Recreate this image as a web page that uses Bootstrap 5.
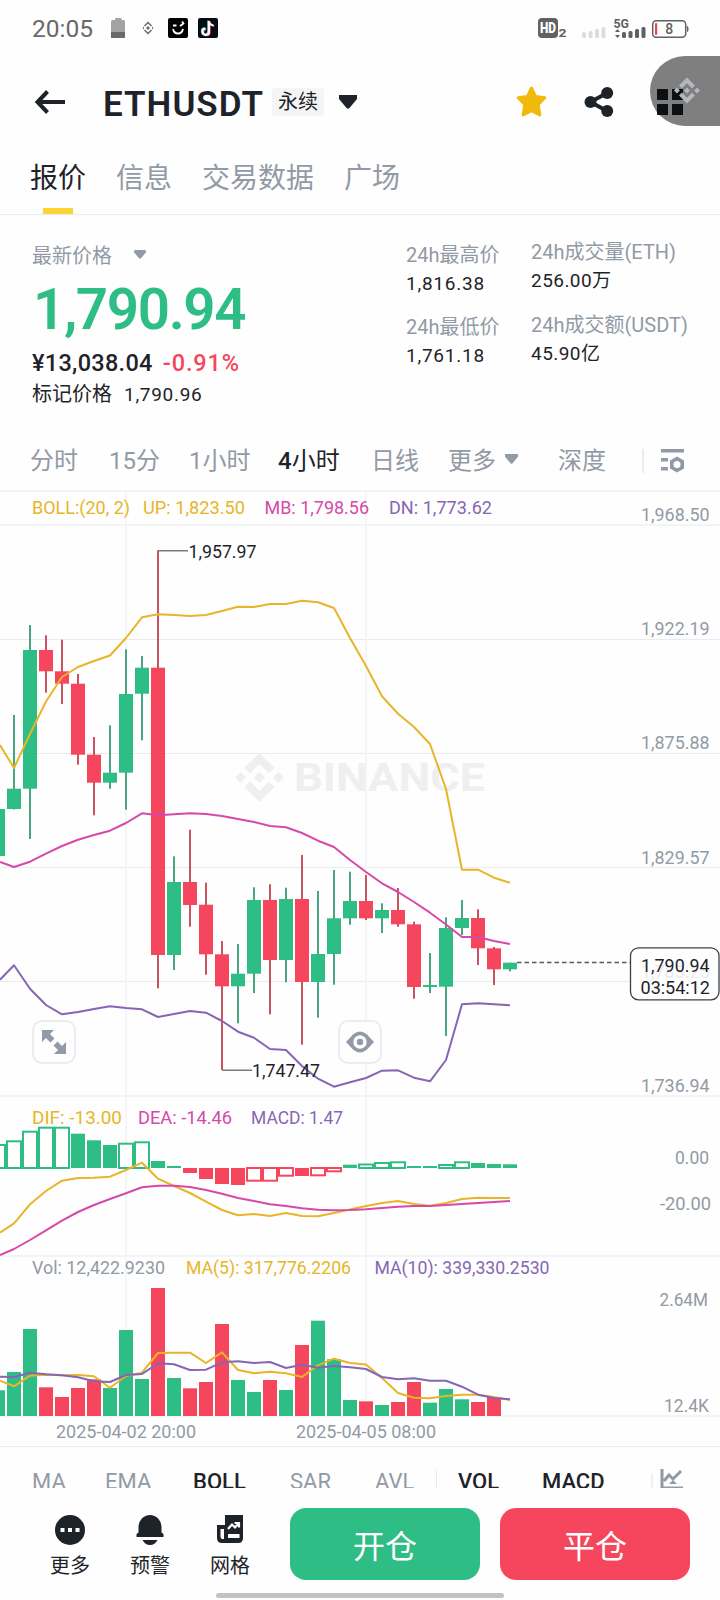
<!DOCTYPE html>
<html lang="zh-CN">
<head>
<meta charset="utf-8">
<meta name="viewport" content="width=device-width, initial-scale=1">
<title>ETHUSDT</title>
<link rel="stylesheet" href="https://cdn.jsdelivr.net/npm/bootstrap@5.3.0/dist/css/bootstrap.min.css">
<style>
:root{--ink:#1e2329;--dim:#929aa5;--up:#2ebd85;--down:#f6465d}
body{width:720px;height:1600px;overflow:hidden;background:#fefefe;color:var(--ink);font-family:Roboto,"Noto Sans CJK SC",sans-serif;font-weight:400}
svg{display:block;flex:none}
.dim{color:var(--dim)}
.t{white-space:nowrap;line-height:1}
.tracks{display:grid;align-items:center}
.status{height:56px;padding-left:32px;padding-top:2px}
.status svg{overflow:visible}
.status .clock{font-size:24.5px;color:#68696b;width:79px;padding-top:1px}
.head{height:92px;padding-left:34px}
.pair{font-size:35px;font-weight:600;width:168px;margin-left:37px;letter-spacing:1px;padding-top:4px}
.perp{width:52px;height:28px;background:#f5f5f5;border-radius:4px;font-size:20px;margin-left:1px}
.tabs{height:67px;grid-template-columns:86px 86px 142px 90px;padding-left:30px;font-size:28px;border-bottom:1px solid #eaecef;position:relative}
.tabs .t{padding-bottom:4px}
.tabs::after{content:"";position:absolute;left:43px;bottom:0;width:30px;height:6px;background:#fcd535}
.quote{height:219px;padding-left:32px;display:grid;grid-template-columns:374px 125px 189px}
.quote .lbl{font-size:20px;line-height:30px;white-space:nowrap}
.quote .val{font-size:19px;line-height:28px;white-space:nowrap;letter-spacing:.75px}
.last{font-size:56.5px;font-weight:600;color:var(--up);line-height:60px;height:67px;letter-spacing:-1.35px;margin-left:1px;margin-top:9px}
.fiat{font-size:23.5px;font-weight:500;line-height:30px;white-space:nowrap;letter-spacing:.3px;margin-top:1px}
.fiat .chg{color:var(--down);margin-left:10px;letter-spacing:.9px}
.frames{height:53px;grid-template-columns:79px 80px 89px 93px 77px 110px 84px 19px 30px;padding-left:30px;font-size:24px}
.chart{height:959px;margin-bottom:-3px;margin-top:0}
.chart text{font-size:18px}
.inds{height:42px;overflow:hidden;grid-template-columns:73px 88px 97px 85px 61px 22px 84px 109px 9px 30px;padding-left:32px;padding-top:24px;font-size:22px;align-items:start}
.inds .on,.frames .on{color:var(--ink);font-weight:500}
.frames .on i{font-style:normal;font-weight:400}
.foot{height:104px;padding-left:30px;padding-top:20px}
.foot .act{width:80px;font-size:20px;padding-top:7px;gap:11px}
.trade{width:190px;height:72px;border:0;border-radius:16px;font-size:32px;color:#fff;padding:6px 0 0}
.long,.long:hover{background:var(--up);margin-left:20px}
.short,.short:hover{background:var(--down);margin-left:20px}
.homebar{width:288px;height:5px;background:#c2c2c2;border-radius:3px;margin:1px auto 0}
.bubble{position:absolute;left:650px;top:56px;width:70px;height:70px;border-radius:35px 0 0 35px;background:rgba(0,0,0,.5)}
.bubble svg{position:absolute;left:24px;top:21px}
</style>
</head>
<body>
<svg width="0" height="0" style="position:absolute"><defs>
<symbol id="bn" viewBox="0 0 24 24"><path d="M16.624 13.9202l2.7175 2.7154-7.353 7.353-7.353-7.352 2.7175-2.7164 4.6355 4.6595 4.6356-4.6595zm4.6366-4.6366L24 12l-2.7154 2.7164L18.5682 12l2.6924-2.7164zm-9.272.001l2.7163 2.6914-2.7164 2.7174v-.001L9.2721 12l2.7164-2.7154zm-9.2722-.001L5.4088 12l-2.6914 2.6924L0 12l2.7164-2.7164zM11.9885.0115l7.353 7.329-2.7174 2.7154-4.6356-4.6356-4.6355 4.6595-2.7174-2.7154 7.353-7.353z"/></symbol>
<symbol id="caret" viewBox="0 0 18 14"><path d="M0 0H18V4L10.500 13Q9 14.500 7.500 13L0 4Z"/></symbol>
</defs></svg>

<div class="status d-flex align-items-center">
  <div class="clock t">20:05</div>
  <svg width="109" height="22" viewBox="0 0 109 22">
    <path d="M0 3.500Q0 2 1.500 2H4V1Q4 0 5 0H9.500Q10.500 0 10.500 1V2H12.500Q14 2 14 3.500V20H0Z" fill="#a3a3a5"/><path d="M0 14H14V19Q14 20 13 20H1Q0 20 0 19Z" fill="#6a6a6c"/>
    <g fill="none" stroke="#6a6a6c" stroke-width="1.500"><path d="M33.500 8L37 4.500 40.500 8M33.500 12L37 15.500 40.500 12"/></g><path d="M37 8L39 10 37 12 35 10ZM31.500 10L33 8.500V11.500ZM42.500 10L41 8.500V11.500Z" fill="#6a6a6c"/>
    <rect x="57" y="0" width="20" height="20" rx="2"/><path d="M62 7.500H65.500M69 8L72.500 5.500M71 3.500L73 6M62 11Q63 15.500 67 15.500T72 11" fill="none" stroke="#fff" stroke-width="1.800"/>
    <rect x="87" y="0" width="20" height="20" rx="2" fill="#070b14"/><path d="M98 3V13.500A3.200 3.200 0 1 1 94.500 10.500M98 3Q98.500 7 102.500 7.500" transform="translate(-.8 -.5)" fill="none" stroke="#4fe0d8" stroke-width="2"/><path d="M98 3V13.500A3.200 3.200 0 1 1 94.500 10.500M98 3Q98.500 7 102.500 7.500" transform="translate(.7 .5)" fill="none" stroke="#f0446a" stroke-width="2"/><path d="M98 3V13.500A3.200 3.200 0 1 1 94.500 10.500M98 3Q98.500 7 102.500 7.500" fill="none" stroke="#fff" stroke-width="2"/>
  </svg>
  <svg class="ms-auto" width="182" height="22" viewBox="0 0 182 22">
    <rect x="0" y="0" width="20" height="20" rx="4" fill="#606163"/><text x="2" y="15" font-size="14" font-weight="900" fill="#fff" textLength="16" lengthAdjust="spacingAndGlyphs">HD</text><text x="20.500" y="19" font-size="11.500" font-weight="700" fill="#606163" textLength="8" lengthAdjust="spacingAndGlyphs">2</text>
    <g fill="#dcdde0"><rect x="44" y="14" width="4" height="6" rx="1.500"/><rect x="50.500" y="13" width="4" height="7" rx="1.500"/><rect x="57" y="11" width="4" height="9" rx="1.500"/><rect x="63.500" y="9" width="4" height="11" rx="1.500"/></g>
    <g fill="#606163"><text x="75.500" y="10" font-size="13.500" font-weight="700" textLength="15.500" lengthAdjust="spacingAndGlyphs">5G</text><path d="M79.500 11L82 14H77ZM79.500 20L77 17H82Z"/><rect x="84" y="14" width="4" height="6" rx="1.500"/><rect x="90.500" y="13" width="4" height="7" rx="1.500"/><rect x="97" y="11" width="4" height="9" rx="1.500"/><rect x="103.500" y="9" width="4" height="11" rx="1.500"/></g>
    <rect x="114.700" y="2.700" width="33" height="16.500" rx="3.500" fill="#fff" stroke="#606163" stroke-width="1.500"/><rect x="117" y="5" width="2.200" height="12" rx="1" fill="#e5484d"/><path d="M149 8Q150.500 8 150.500 11T149 14Z" fill="#606163"/><text x="127.200" y="16" font-size="14" font-weight="500" fill="#606163">8</text>
  </svg>
</div>

<div class="head d-flex align-items-center">
  <svg width="32" height="24" viewBox="0 0 32 24"><path d="M3 12H31M13.500 1.500L3.500 12 13.500 22.500" fill="none" stroke="#1e2329" stroke-width="4"/></svg>
  <div class="pair t">ETHUSDT</div>
  <div class="perp t d-flex align-items-center justify-content-center">永续</div>
  <svg style="margin-left:15px" width="18" height="14" fill="#1e2329"><use href="#caret"/></svg>
  <svg style="margin-left:159px" width="31" height="32" viewBox="0 0 31 32"><path d="M15.500 2L19.500 10.500 28.800 11.800 22.300 18.500 23.800 29 15.500 24.700 7.200 29 8.700 18.500 2.200 11.800 11.500 10.500Z" fill="#f0b90b" stroke="#f0b90b" stroke-width="3" stroke-linejoin="round"/></svg>
  <svg style="margin-left:37px" width="30" height="32" viewBox="0 0 30 32"><path d="M6.500 16L23 7M6.500 16L23 25" stroke="#1e2329" stroke-width="4"/><g fill="#1e2329"><circle cx="6.500" cy="16" r="6"/><circle cx="23.200" cy="7" r="6"/><circle cx="23.200" cy="25" r="6"/></g></svg>
  <svg style="margin-left:42px" width="28" height="28" viewBox="0 0 28 28"><path d="M1 1H12V12H1ZM16 1H27V12H16ZM1 16H12V27H1ZM16 16H27V27H16Z" fill="#1a2027"/></svg>
</div>

<nav class="tabs tracks">
  <div class="t">报价</div><div class="t dim">信息</div><div class="t dim">交易数据</div><div class="t dim">广场</div>
</nav>

<section class="quote">
  <div style="padding-top:26px">
    <div class="lbl dim d-flex align-items-center">最新价格<svg style="margin-left:22px;margin-bottom:3px" width="12" height="9" fill="#929aa5"><use href="#caret"/></svg></div>
    <div class="last">1,790.94</div>
    <div class="fiat">¥13,038.04<span class="chg">-0.91%</span></div>
    <div class="lbl" style="padding-top:1px">标记价格<span style="font-size:19px;margin-left:12px;letter-spacing:.7px">1,790.96</span></div>
  </div>
  <div style="padding-top:25px">
    <div class="lbl dim">24h最高价</div><div class="val" style="margin-bottom:14px">1,816.38</div>
    <div class="lbl dim">24h最低价</div><div class="val">1,761.18</div>
  </div>
  <div style="padding-top:22px">
    <div class="lbl dim">24h成交量(ETH)</div><div class="val" style="margin-bottom:15px;letter-spacing:.45px">256.00万</div>
    <div class="lbl dim">24h成交额(USDT)</div><div class="val" style="letter-spacing:.45px">45.90亿</div>
  </div>
</section>

<nav class="frames tracks dim">
  <div class="t">分时</div><div class="t">15分</div><div class="t">1小时</div><div class="t on">4<i>小时</i></div><div class="t">日线</div>
  <div class="t d-flex align-items-center">更多<svg style="margin-left:9px;margin-bottom:4px" width="13" height="10" fill="#929aa5"><use href="#caret"/></svg></div>
  <div class="t">深度</div><div style="width:2px;height:24px;background:#eaecef;margin-left:0"></div>
  <svg width="24" height="26" viewBox="0 0 24 26" fill="#929aa5"><path d="M0 1H23V4.500H0ZM0 10H7V13.500H0ZM0 19H7V22.500H0Z"/><path fill-rule="evenodd" d="M16 8.500L23 12.500V20.500L16 24.500 9 20.500V12.500ZM16 13A3.500 3.500 0 1 0 16 20A3.500 3.500 0 1 0 16 13Z"/></svg>
</nav>

<svg class="chart" id="chart" width="720" height="959" viewBox="0 487 720 959"></svg>

<div class="inds tracks dim" style="border-top:1px solid #eaecef;margin-top:3px">
  <div class="t">MA</div><div class="t">EMA</div><div class="t on">BOLL</div><div class="t">SAR</div><div class="t">AVL</div>
  <div style="width:1px;height:22px;background:#eaecef;margin-top:-2px"></div>
  <div class="t on">VOL</div><div class="t on">MACD</div>
  <div style="width:2px;height:16px;background:#eff0f2;margin-top:2px"></div>
  <svg width="24" height="24" viewBox="0 0 24 24" style="margin-top:-2px"><path d="M2 0V19H23M4 12L9 6 13 10 21 2" fill="none" stroke="#929aa5" stroke-width="3"/><path d="M13 11L17 15H9Z" fill="#929aa5"/></svg>
</div>

<footer class="foot d-flex">
  <div class="act d-flex flex-column align-items-center">
    <svg width="30" height="30" viewBox="0 0 30 30"><circle cx="15" cy="15" r="15" fill="#1e2329"/><path d="M5.500 13H9.500V17H5.500ZM13 13H17V17H13ZM20.500 13H24.500V17H20.500Z" fill="#fff"/></svg><div class="t">更多</div></div>
  <div class="act d-flex flex-column align-items-center">
    <svg width="30" height="30" viewBox="0 0 30 30" fill="#1e2329"><path d="M3.500 12A11.500 12 0 0 1 26.500 12V17.500L28.500 19V22H1.500V19L3.500 17.500ZM7.500 25H22.500Q20 30 15 30T7.500 25Z"/></svg><div class="t">预警</div></div>
  <div class="act d-flex flex-column align-items-center">
    <svg width="30" height="30" viewBox="0 0 30 30"><path d="M10 0H28V23Q28 28 23 28H7Q2 28 2 23V10H10Z" fill="#1e2329"/><path d="M5.500 14H9V24H7.500Q5.500 24 5.500 21ZM13 19H24.500V23H13Z" fill="#fff"/><path d="M13 14L17 9.500 20 12.500 24 8M19.500 8H24V12.500" fill="none" stroke="#fff" stroke-width="2.200"/></svg><div class="t">网格</div></div>
  <button class="btn trade long">开仓</button>
  <button class="btn trade short">平仓</button>
</footer>
<div class="homebar"></div>

<div class="bubble"><svg width="26" height="27" fill="#b3b8be"><use href="#bn"/></svg></div>

<script>
const G='#2ebd85',R='#f6465d',GW='#47a581',RW='#c9545f',Y='#e8b528',P='#d649a8',V='#8666b4';
const X=i=>14+16*i;
let o='';
const rect=(x,y,w,h,f)=>o+=`<rect x="${x}" y="${y}" width="${w}" height="${h}" fill="${f}"/>`;
const text=(s,x,y,w,f,extra='')=>o+=`<text x="${x}" y="${y}" fill="${f}" textLength="${w}" lengthAdjust="spacingAndGlyphs" ${extra}>${s}</text>`;
// grid
[490,524,1095,1255,1415].forEach(y=>rect(0,y,720,2,'#f3f4f5'));
[639,753,867,981].forEach(y=>rect(0,y,720,1,'#e9ebed'));
[125,365].forEach(x=>rect(x,490,2,926,'#f4f5f6'));
// watermark
o+='<svg x="235" y="753" width="49" height="49" fill="#efefef"><use href="#bn"/></svg>';
text('BINANCE',294,791,191,'#efefef','style="font-size:38px;font-weight:700"');
// candles: high, top, bottom, low, up
const C=[[809,809,856,856,1],[715,788.7,809,809.5,1],[625,650,788.7,839,1],[635.3,650,671.3,692.7,0],[639.7,671.3,683.7,704,0],[674,683.7,754.7,764.7,0],[737,754.7,782.7,815.3,0],[725.3,772.7,782.7,788.7,1],[649.3,694,772.7,809.7,1],[656,667.7,693.7,740.3,1],[550.3,667.7,955,988.3,0],[856.3,882,955,970,1],[829.7,882,905,926.7,0],[882.7,904.7,954.3,974.7,0],[941,954.3,986.3,1070,0],[944,973.7,986.3,1023.3,1],[887.3,900,973.7,993,1],[884.3,900,960,1014.3,0],[887.7,899,960,982.3,1],[855,899,982,1044.7,0],[891,954,982,1017.7,1],[870,918.3,954,984.7,1],[871.7,901,918.3,924.7,1],[875,901,918.3,920,0],[903.3,910,918.3,933,1],[888,910,924.3,926.7,0],[921.7,924.3,987,998.7,0],[953,985,987,993,1],[917.3,928,986.7,1036,1],[900,918,928,935,1],[909.3,918,948.3,965,0],[947,948.3,969.3,985,0],[962.7,962.7,969.3,971.3,1]];
C.forEach(([h,t,b,l,u],k)=>{const x=X(k-1);rect(x-1,h,2,l-h,u?GW:RW);rect(x-7,t,14,b-t,u?G:R)});
// MACD histogram: edge, hollow
const M=[[1145,1],[1141.3,1],[1131.7,1],[1127.7,1],[1127.7,1],[1133.7,0],[1140.3,0],[1145,0],[1143.7,1],[1142.3,1],[1161,0],[1166,0],[1173,0],[1179,0],[1184,0],[1185,0],[1180.7,1],[1180.7,1],[1175.7,1],[1176,0],[1175.3,1],[1171.3,1],[1164.7,0],[1164.5,1],[1163,1],[1162.3,1],[1166,0],[1166,0],[1165,1],[1162.3,1],[1163,0],[1164,0],[1164.3,0]];
M.forEach(([e,hol],k)=>{const x=X(k-1),up=e<1168,c=up?G:R,t=up?e:1168,b=up?1168:e;
 if(hol)o+=`<rect x="${x-7}" y="${t}" width="14" height="${b-t}" fill="#fff" stroke="${c}" stroke-width="2"/>`;else rect(x-7,t,14,b-t,c)});
// volume, negative for a falling period
const W=[1390.3,1372,1329,-1387.3,-1397,-1388,-1379.3,1388,1330,1379,-1288,1378,-1388.3,-1382,-1324,1380,1392,-1380,1390,-1345,1320.7,1359.3,1400,-1401.3,1405,-1402,-1382,1402.7,1389,1399.3,-1402,-1397];
W.forEach((v,k)=>{const y=Math.abs(v);rect(X(k-1)-7,y,14,1416-y,v>0?G:R)});
// lines: the first value is at the left edge of the plot
const line=(a,c)=>o+=`<polyline fill="none" stroke="${c}" stroke-width="2" stroke-linejoin="round" points="${a.map((y,i)=>(i?X(i-1):0)+','+y).join(' ')}"/>`;
line([745,768,734,701.5,677,667,661,655.5,638,617.3,614.3,615,616,615,611,606.7,607,604,604,600.7,602.3,608,638,666,696.3,713.7,727,744,789,869.7,869.7,877.7,882.7],Y);
line([862,867,861.7,853.7,846,839.7,835,830.7,823,813.3,815.3,814.3,813.3,814,816,819,822,826,827.3,833,840.7,847,860,872,883.3,892,902,912.7,924.5,937,937,941,944],P);
line([979.7,965.3,988.7,1005,1014.3,1012,1009,1006.3,1008,1009.3,1017,1014,1011,1012.7,1021,1031.7,1037.7,1049,1050,1066,1078.7,1086.7,1082.3,1078,1070.7,1070.3,1077.7,1081.3,1060,1004.3,1003.3,1004.3,1005.3],V);
line([1232.7,1223.3,1204.3,1191,1180.7,1178,1177.7,1176.7,1170,1162.7,1178.7,1186,1193,1201.7,1210,1215.3,1214,1216,1213,1216,1216.3,1213,1209.5,1206,1203,1201,1204,1205.7,1203,1199,1197.7,1198,1198],Y);
line([1255,1249,1240,1230.3,1220.7,1212,1205,1199,1193.3,1187.3,1185.7,1185.7,1187,1190,1193.7,1198,1201,1204.3,1206,1208.3,1209.7,1210.3,1210,1209.3,1208,1206.7,1206,1206,1205,1204,1203,1202,1201],P);
line([1380.7,1386.3,1375.7,1374.7,1375.3,1375,1376.3,1387.7,1376,1372.7,1353,1352.7,1352.7,1363,1352.3,1370,1373.3,1371.7,1373.3,1377,1365.3,1358.7,1363,1364.5,1378,1393,1397.7,1398.3,1396,1394.7,1394.7,1397,1400],Y);
line([1376.7,1377,1372.7,1374.3,1375.3,1377.3,1381.3,1382,1375,1374,1363.3,1364.3,1370,1369.7,1362.3,1361.3,1363,1362,1368,1364.7,1367.7,1366,1367.3,1369,1377,1379.3,1378.3,1380.7,1380.7,1386.7,1394.7,1398,1399.3],V);
// extremes
rect(158,550,30,1.5,'#777a80');text('1,957.97',188.500,558,68,'#1e2329');
rect(222,1069.5,30,1.5,'#777a80');text('1,747.47',252,1077,68,'#1e2329');
// legends
text('BOLL:(20, 2)',32,514,98,Y);text('UP: 1,823.50',143,514,102,Y);text('MB: 1,798.56',264.500,514,104.500,P);text('DN: 1,773.62',389,514,103,V);
text('DIF: -13.00',32,1124,90,Y);text('DEA: -14.46',138,1124,94,P);text('MACD: 1.47',251,1124,92,V);
text('Vol: 12,422.9230',32,1274,133,'#929aa5');text('MA(5): 317,776.2206',186,1274,165,Y);text('MA(10): 339,330.2530',374.500,1274,175,V);
// axis
[['1,968.50',521],['1,922.19',635],['1,875.88',749],['1,829.57',864],['1,736.94',1092]].forEach(([s,y])=>text(s,641,y,68.500,'#929aa5'));
text('0.00',675,1164,34,'#929aa5');text('-20.00',660,1210,51,'#929aa5');text('2.64M',659.500,1306,48.500,'#929aa5');text('12.4K',664,1412,45,'#929aa5');
text('2025-04-02 20:00',56,1438,140,'#929aa5');text('2025-04-05 08:00',296,1438,140,'#929aa5');
// last price
o+='<path d="M517 962.500H630" stroke="#555a60" stroke-width="1.500" stroke-dasharray="4.500 3"/><rect x="630.500" y="947.800" width="88.500" height="52" rx="8" fill="#fefefe" stroke="#3b4148" stroke-width="1.300"/>';
text('1,783.25',641,978,68.500,'#e9ebee');text('1,790.94',641,972,68.500,'#1e2329');text('03:54:12',640.500,994,69.500,'#1e2329');
// tools
[33,339].forEach(x=>o+=`<rect x="${x}" y="1021" width="42" height="42" rx="9" fill="#fefefe" stroke="#eaecef" stroke-width="2"/>`);
o+='<path d="M42 1030H54L50 1034 54.500 1038.500 50.500 1042.500 46 1038 42 1042ZM66 1054H54L58 1050 53.500 1045.500 57.500 1041.500 62 1046 66 1042Z" fill="#929aa5"/>';
o+='<path d="M346 1042L353 1034.500Q360 1028.500 367 1034.500L374 1042 367 1049.500Q360 1055.500 353 1049.500Z" fill="#929aa5"/><circle cx="360" cy="1042" r="5" fill="#929aa5" stroke="#fff" stroke-width="3.500"/>';
document.getElementById('chart').innerHTML=o;
</script>
<script src="https://cdn.jsdelivr.net/npm/bootstrap@5.3.0/dist/js/bootstrap.bundle.min.js"></script>
</body>
</html>
